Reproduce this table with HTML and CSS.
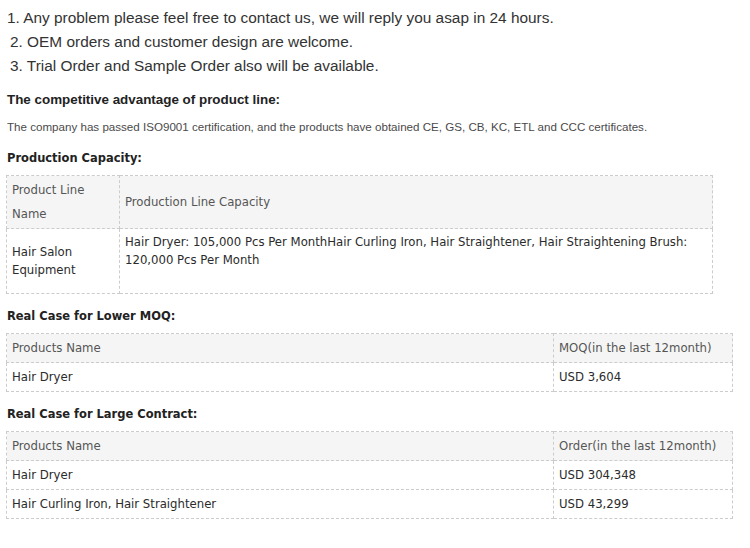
FILE: index.html
```html
<!DOCTYPE html>
<html lang="en">
<head>
<meta charset="utf-8">
<title>Product info</title>
<link rel="stylesheet" href="styles.css">
</head>
<body>
<div class="page">
  <div class="intro">
    <p class="line">1. Any problem please feel free to contact us, we will reply you asap in 24 hours.</p>
    <p class="line indent">2. OEM orders and customer design are welcome.</p>
    <p class="line indent">3. Trial Order and Sample Order also will be available.</p>
  </div>

  <h3 class="adv-title">The competitive advantage of product line:</h3>
  <p class="cert">The company has passed ISO9001 certification, and the products have obtained CE, GS, CB, KC, ETL and CCC certificates.</p>

  <h4 class="sec-title first">Production Capacity:</h4>
  <table class="tbl cap">
    <tr class="head">
      <td class="c1 two-line">Product Line<br>Name</td>
      <td class="c2">Production Line Capacity</td>
    </tr>
    <tr class="body-row">
      <td class="c1 mid">Hair Salon<br>Equipment</td>
      <td class="c2 top">Hair Dryer: 105,000 Pcs Per MonthHair Curling Iron, Hair Straightener, Hair Straightening Brush: 120,000 Pcs Per Month</td>
    </tr>
  </table>

  <h4 class="sec-title">Real Case for Lower MOQ:</h4>
  <table class="tbl wide">
    <tr class="head">
      <td class="n">Products Name</td>
      <td class="v">MOQ(in the last 12month)</td>
    </tr>
    <tr>
      <td class="n">Hair Dryer</td>
      <td class="v">USD 3,604</td>
    </tr>
  </table>

  <h4 class="sec-title">Real Case for Large Contract:</h4>
  <table class="tbl wide">
    <tr class="head">
      <td class="n">Products Name</td>
      <td class="v">Order(in the last 12month)</td>
    </tr>
    <tr>
      <td class="n">Hair Dryer</td>
      <td class="v">USD 304,348</td>
    </tr>
    <tr>
      <td class="n">Hair Curling Iron, Hair Straightener</td>
      <td class="v">USD 43,299</td>
    </tr>
  </table>
</div>
</body>
</html>
```

FILE: styles.css
```css
html, body {
  margin: 0;
  padding: 0;
  background: #ffffff;
}

.page {
  padding: 6px 0 0 6px;
  color: #333333;
}

.intro .line {
  margin: 0;
  padding-left: 1px;
  font-family: "Liberation Sans", Arial, sans-serif;
  font-size: 15.4px;
  line-height: 24px;
  color: #333333;
}

.intro .line.indent {
  padding-left: 4px;
}

.adv-title {
  margin: 12px 0 0 1px;
  font-family: "Liberation Sans", Arial, sans-serif;
  font-size: 13.4px;
  font-weight: bold;
  line-height: 20px;
  color: #222222;
}

.cert {
  margin: 8px 0 0 1px;
  font-family: "Liberation Sans", Arial, sans-serif;
  font-size: 11.6px;
  line-height: 18px;
  color: #4a4a4a;
}

.sec-title {
  margin: 12px 0 7px 1px;
  font-family: "DejaVu Sans Condensed", "DejaVu Sans", sans-serif;
  font-size: 12.75px;
  font-weight: bold;
  line-height: 20px;
  color: #222222;
}

.sec-title.first {
  margin-top: 12px;
  margin-bottom: 7px;
}

.tbl {
  border-collapse: collapse;
  font-family: "DejaVu Sans Condensed", "DejaVu Sans", sans-serif;
  font-size: 13px;
  color: #2b2b2b;
}

.tbl td {
  border: 1px dashed #cccccc;
  padding: 5px 5px;
  line-height: 18px;
  text-align: left;
}

.tbl .head td {
  background: #f5f5f5;
  color: #555555;
}

.cap {
  width: 707px;
}

.cap .c1 {
  width: 102px;
}

.cap .two-line {
  line-height: 24px;
  padding: 2px 5px;
}

.cap .c2 {
  vertical-align: middle;
}

.cap .mid {
  vertical-align: middle;
}

.cap .top {
  vertical-align: top;
  padding: 4px 5px 24px 5px;
}

.wide {
  width: 727px;
}

.wide .n {
  width: 536px;
}
```
